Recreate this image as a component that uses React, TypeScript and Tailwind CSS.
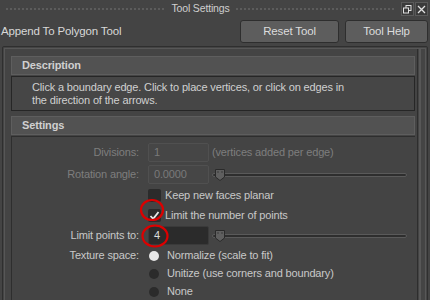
import React from 'react';

const Slider: React.FC<{ className?: string }> = ({ className }) => (
  <div className={`relative flex-1 h-[14px] flex items-center ${className ?? ''}`}>
    <div className="w-full h-[4px] rounded-[2px] bg-[#2e2e2e] border border-[#5a5a5a]" />
    <svg className="absolute left-[2px] top-0" width="12" height="14" viewBox="0 0 12 14">
      <path d="M1.5 1.5 H10.5 V9 L6 12.5 L1.5 9 Z" fill="#5f5f5f" stroke="#2a2a2a" strokeWidth="1" />
      <path d="M4 3 V5 M8 3 V5" stroke="#3a3a3a" strokeWidth="1" />
    </svg>
  </div>
);

const Field: React.FC<{ value: string; disabled?: boolean }> = ({ value, disabled }) => (
  <div
    className={`w-[61px] h-[19px] rounded-[2px] flex items-center px-[5px] border ${
      disabled ? 'bg-[#464646] border-[#505050] text-[#7a7a7a]' : 'bg-[#2b2b2b] border-[#3a3a3a] text-[#dcdcdc]'
    }`}
  >
    {value}
  </div>
);

const Check: React.FC<{ checked?: boolean }> = ({ checked }) => (
  <div className="w-[13px] h-[13px] rounded-[2px] bg-[#2b2b2b] flex items-center justify-center">
    {checked && (
      <svg width="11" height="11" viewBox="0 0 11 11">
        <path d="M1.5 6 L4.2 8.8 L9.5 2" fill="none" stroke="#e8e8e8" strokeWidth="1.8" />
      </svg>
    )}
  </div>
);

const Radio: React.FC<{ on?: boolean }> = ({ on }) => (
  <div className={`w-[10px] h-[10px] rounded-full ${on ? 'bg-[#e6e6e6]' : 'bg-[#2b2b2b]'}`} />
);

export default function App() {
  return (
    <div className="relative w-[430px] h-[300px] overflow-hidden bg-[#444444] text-[11px] tracking-[-0.15px] text-[#c8c8c8] font-['Liberation_Sans',Arial,sans-serif]">
      {/* title bar */}
      <div className="h-[18px] flex items-center pl-[6px] pr-[2px] gap-[6px]">
        <div className="flex-1 h-[2px] bg-[repeating-linear-gradient(90deg,#5c5c5c_0_2px,transparent_2px_4px)]" />
        <span className="text-[10.5px] text-[#cfcfcf]">Tool Settings</span>
        <div className="flex-1 h-[2px] bg-[repeating-linear-gradient(90deg,#5c5c5c_0_2px,transparent_2px_4px)]" />
        <div className="flex gap-[1px]">
          <div className="w-[13px] h-[14px] bg-[#3a3a3a] border border-[#5a5a5a] flex items-center justify-center">
            <svg width="9" height="9" viewBox="0 0 9 9">
              <rect x="3" y="0.5" width="5" height="5" fill="none" stroke="#e0e0e0" />
              <rect x="0.5" y="3" width="5" height="5" fill="#3a3a3a" stroke="#e0e0e0" />
            </svg>
          </div>
          <div className="w-[13px] h-[14px] bg-[#3a3a3a] border border-[#5a5a5a] flex items-center justify-center">
            <svg width="9" height="9" viewBox="0 0 9 9">
              <path d="M1 1 L8 8 M8 1 L1 8" stroke="#e0e0e0" strokeWidth="1.3" />
            </svg>
          </div>
        </div>
      </div>

      {/* tool name + buttons */}
      <div className="h-[27px] flex items-center pl-[1px] pr-[2px]">
        <span className="flex-1 text-[11.5px] text-[#d8d8d8]">Append To Polygon Tool</span>
        <button className="w-[99px] h-[23px] rounded-[3px] bg-[#5d5d5d] border border-[#2e2e2e] text-[11.5px] text-[#dcdcdc]">
          Reset Tool
        </button>
        <button className="ml-[6px] w-[83px] h-[23px] rounded-[3px] bg-[#5d5d5d] border border-[#2e2e2e] text-[11.5px] text-[#dcdcdc]">
          Tool Help
        </button>
      </div>

      {/* frame */}
      <div className="mx-[2px] mt-[1px] h-[260px] border border-[#2f2f2f] rounded-[2px] p-[1px]">
        <div className="h-full border border-[#575757] flex">
          <div className="flex-1 pl-[6px] pt-[7px] flex flex-col">
            {/* Description */}
            <div className="h-[19px] bg-[#525252] border border-[#5e5e5e] flex items-center pl-[10px] font-bold text-[#d0d0d0]">
              Description
            </div>
            <div className="mt-[1px] h-[35px] bg-[#464646] border border-[#262626] pl-[20px] pt-[4px] leading-[13px] text-[#d0d0d0]">
              Click a boundary edge. Click to place vertices, or click on edges in
              <br />
              the direction of the arrows.
            </div>

            {/* Settings */}
            <div className="mt-[5px] h-[19px] bg-[#525252] border border-[#5e5e5e] flex items-center pl-[10px] font-bold text-[#d0d0d0]">
              Settings
            </div>
            <div className="mt-[1px] flex-1 border-l border-t border-[#2e2e2e] flex flex-col pt-[6px] gap-[3px]">
              <div className="flex items-center h-[19px]">
                <span className="w-[136px] text-right pr-[9px] text-[#7e7e7e]">Divisions:</span>
                <Field value="1" disabled />
                <span className="ml-[3px] text-[#7e7e7e]">(vertices added per edge)</span>
              </div>
              <div className="flex items-center h-[19px]">
                <span className="w-[136px] text-right pr-[9px] text-[#7e7e7e]">Rotation angle:</span>
                <Field value="0.0000" disabled />
                <Slider className="ml-[3px] mr-[8px]" />
              </div>
              <div className="flex items-center h-[17px] pl-[136px] gap-[4px]">
                <Check />
                <span>Keep new faces planar</span>
              </div>
              <div className="flex items-center h-[16px] pl-[136px] gap-[4px]">
                <Check checked />
                <span>Limit the number of points</span>
              </div>
              <div className="flex items-center h-[19px]">
                <span className="w-[136px] text-right pr-[9px]">Limit points to:</span>
                <Field value="4" />
                <Slider className="ml-[3px] mr-[8px]" />
              </div>
              <div className="flex items-center h-[15px]">
                <span className="w-[136px] text-right pr-[9px]">Texture space:</span>
                <div className="pl-[1px] flex items-center gap-[8px]">
                  <Radio on />
                  <span>Normalize (scale to fit)</span>
                </div>
              </div>
              <div className="flex items-center h-[15px] pl-[137px] gap-[8px]">
                <Radio />
                <span>Unitize (use corners and boundary)</span>
              </div>
              <div className="flex items-center h-[15px] pl-[137px] gap-[8px]">
                <Radio />
                <span>None</span>
              </div>
            </div>
          </div>
          {/* right scroll gutter */}
          <div className="w-[8px] ml-[2px] border-l border-[#2e2e2e] flex">
            <div className="w-[2px] ml-[1px] bg-[#575757]" />
          </div>
        </div>
      </div>

      {/* red annotation circles */}
      <svg className="absolute left-0 top-0 pointer-events-none" width="430" height="300">
        <ellipse cx="152" cy="210" rx="11" ry="10" fill="none" stroke="#dd0000" strokeWidth="2.2" />
        <ellipse cx="155" cy="236" rx="12.5" ry="10.5" fill="none" stroke="#dd0000" strokeWidth="2.2" />
      </svg>
    </div>
  );
}
